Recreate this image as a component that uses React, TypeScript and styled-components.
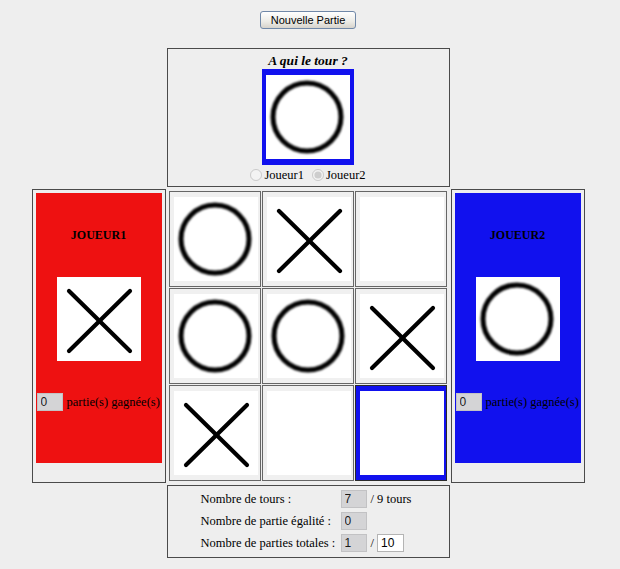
import { useId } from 'react';
import styled, { createGlobalStyle } from 'styled-components';

type MarkKind = 'x' | 'o' | null;

const board: MarkKind[] = ['o', 'x', null, 'o', 'o', 'x', 'x', null, null];
const activeCell = 8;

const RED = '#ee1111';
const BLUE = '#1111ee';

const GlobalStyle = createGlobalStyle`
  body {
    margin: 8px;
    background: #eeeeee;
    font-family: "Liberation Serif", "Times New Roman", serif;
    font-size: 12.5px;
    color: #000;
  }
`;

const Mark = ({ kind }: { kind: MarkKind }) => {
  const id = useId().replace(/:/g, '');
  if (kind === 'x') {
    return (
      <svg width="84" height="84" viewBox="0 0 84 84">
        <g stroke="#000" strokeWidth="4.2" strokeLinecap="round">
          <line x1="12" y1="14" x2="73" y2="74" />
          <line x1="73" y1="14" x2="12" y2="74" />
        </g>
      </svg>
    );
  }
  if (kind === 'o') {
    return (
      <svg width="84" height="84" viewBox="0 0 84 84">
        <defs>
          <filter id={`blur${id}`} x="-10%" y="-10%" width="120%" height="120%">
            <feGaussianBlur stdDeviation="1.1" />
          </filter>
        </defs>
        <circle
          cx="41"
          cy="42"
          r="34"
          fill="none"
          stroke="#000"
          strokeWidth="5"
          filter={`url(#blur${id})`}
        />
      </svg>
    );
  }
  return null;
};

const App = () => {
  return (
    <>
      <GlobalStyle />
      <Page>
        <NewGameButton type="button">Nouvelle Partie</NewGameButton>
        <Board>
          <TurnBox>
            <TurnTitle>A qui le tour ?</TurnTitle>
            <Frame>
              <Tile>
                <Mark kind="o" />
              </Tile>
            </Frame>
            <RadioRow>
              <RadioLabel>
                <input type="radio" name="tour" disabled />
                Joueur1
              </RadioLabel>
              <RadioLabel>
                <input type="radio" name="tour" disabled defaultChecked />
                Joueur2
              </RadioLabel>
            </RadioRow>
          </TurnBox>

          <PlayerBox $area="p1">
            <PlayerPanel $color={RED}>
              <PlayerName>JOUEUR1</PlayerName>
              <Tile>
                <Mark kind="x" />
              </Tile>
              <ScoreRow>
                <Field value="0" disabled readOnly />
                partie(s) gagnée(s)
              </ScoreRow>
            </PlayerPanel>
          </PlayerBox>

          <GameGrid>
            {board.map((kind, i) => (
              <Cell key={i} $active={i === activeCell}>
                <Tile>
                  <Mark kind={kind} />
                </Tile>
              </Cell>
            ))}
          </GameGrid>

          <PlayerBox $area="p2">
            <PlayerPanel $color={BLUE}>
              <PlayerName>JOUEUR2</PlayerName>
              <Tile>
                <Mark kind="o" />
              </Tile>
              <ScoreRow>
                <Field value="0" disabled readOnly />
                partie(s) gagnée(s)
              </ScoreRow>
            </PlayerPanel>
          </PlayerBox>

          <StatsBox>
            <StatLabel>Nombre de tours :</StatLabel>
            <Field value="7" disabled readOnly />
            <StatExtra>/ 9 tours</StatExtra>

            <StatLabel>Nombre de partie égalité :</StatLabel>
            <Field value="0" disabled readOnly />
            <StatExtra />

            <StatLabel>Nombre de parties totales :</StatLabel>
            <Field value="1" disabled readOnly />
            <StatExtra>
              / <Field defaultValue="10" $width={27} />
            </StatExtra>
          </StatsBox>
        </Board>
      </Page>
    </>
  );
};

const Page = styled.div`
  width: 600px;
  display: flex;
  flex-direction: column;
  align-items: center;
`;

const NewGameButton = styled.button`
  margin-top: 3px;
  width: 96px;
  height: 18px;
  padding: 0;
  border: 1px solid #7088a8;
  border-radius: 3px;
  background: linear-gradient(#ffffff, #ecebe6 60%, #d6d3cc);
  font-family: "Liberation Sans", Arial, sans-serif;
  font-size: 11px;
  color: #000;
`;

const Board = styled.div`
  margin-top: 19px;
  display: grid;
  grid-template-columns: 134px 283px 134px;
  grid-template-rows: 139px 294px 73px;
  grid-template-areas:
    '. turn .'
    'p1 grid p2'
    '. stats .';
  column-gap: 1px;
  row-gap: 2px;
`;

const Box = styled.div`
  box-sizing: border-box;
  border: 1px solid #4a4a4a;
`;

const TurnBox = styled(Box)`
  grid-area: turn;
  display: flex;
  flex-direction: column;
  align-items: center;
  padding-top: 4px;
`;

const TurnTitle = styled.div`
  font-weight: bold;
  font-style: italic;
  font-size: 13.5px;
  line-height: 15px;
`;

const Frame = styled.div`
  margin-top: 1px;
  background: ${BLUE};
  padding: 6px 4px;
`;

const Tile = styled.div`
  width: 84px;
  height: 84px;
  background: #fff;
  display: flex;
`;

const RadioRow = styled.div`
  height: 20px;
  display: flex;
  align-items: center;
  gap: 8px;
`;

const RadioLabel = styled.label`
  display: flex;
  align-items: center;
  color: #000;

  input {
    width: 12px;
    height: 12px;
    margin: 0 2px 0 0;
  }
`;

const PlayerBox = styled(Box)<{ $area: string }>`
  grid-area: ${(p) => p.$area};
  padding: 3px;
`;

const PlayerPanel = styled.div<{ $color: string }>`
  height: 270px;
  background: ${(p) => p.$color};
  display: flex;
  flex-direction: column;
  align-items: center;
  padding-top: 35px;
  box-sizing: border-box;

  ${Tile} {
    margin-top: 34px;
  }
`;

const PlayerName = styled.div`
  font-weight: bold;
  font-size: 12px;
  line-height: 15px;
`;

const ScoreRow = styled.div`
  align-self: stretch;
  margin-top: 32px;
  padding-left: 1px;
  display: flex;
  align-items: center;
  gap: 4px;
  white-space: nowrap;
`;

const Field = styled.input<{ $width?: number }>`
  box-sizing: border-box;
  width: ${(p) => p.$width ?? 26}px;
  height: 18px;
  margin: 0;
  padding: 0 3px;
  border: 1px solid #b4b4b4;
  background: #fff;
  font-family: "Liberation Sans", Arial, sans-serif;
  font-size: 12px;
  color: #000;

  &:disabled {
    background: #d4d4d6;
    border-color: #c2c2c4;
    color: #1a1a1a;
  }
`;

const GameGrid = styled.div`
  grid-area: grid;
  padding: 2px 0;
  display: grid;
  grid-template-columns: repeat(3, 92px);
  grid-auto-rows: 96px;
  gap: 1px;
  justify-content: center;
`;

const Cell = styled.div<{ $active: boolean }>`
  box-sizing: border-box;
  border: 1px solid ${(p) => (p.$active ? '#2a2a2a' : '#666')};
  background: ${(p) => (p.$active ? BLUE : '#f0f0f0')};
  padding: 5px 2px 5px 4px;
`;

const StatsBox = styled(Box)`
  grid-area: stats;
  padding: 4px 0 0 33px;
  display: grid;
  grid-template-columns: 140px 26px auto;
  grid-auto-rows: 18px;
  row-gap: 4px;
  align-items: center;
`;

const StatLabel = styled.div`
  white-space: nowrap;
`;

const StatExtra = styled.div`
  padding-left: 4px;
  display: flex;
  align-items: center;
  gap: 3px;
  white-space: nowrap;
`;

export default App;
